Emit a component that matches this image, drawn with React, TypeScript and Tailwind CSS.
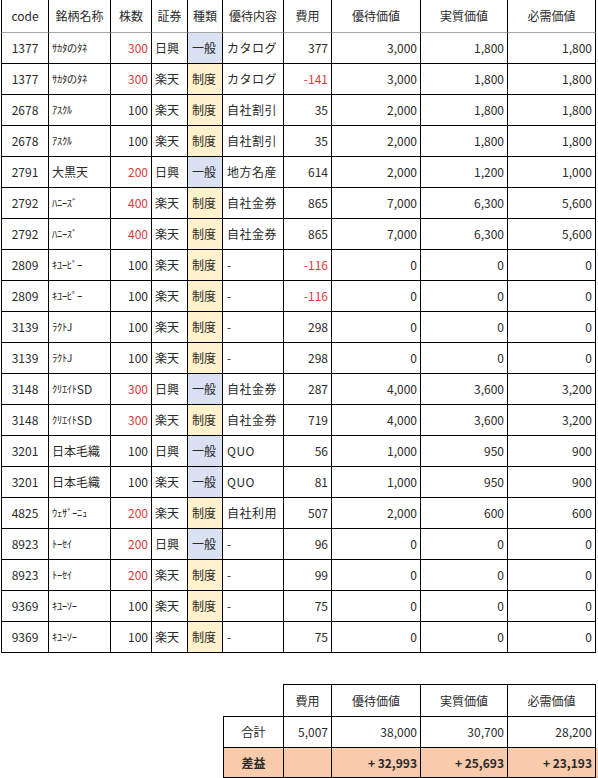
import type { ReactNode } from 'react';

type Kind = '一般' | '制度';

interface Row {
  code: string;
  name: ReactNode;
  shares: number;
  broker: string;
  kind: Kind;
  content: string;
  cost: number;
  yutai: string;
  real: string;
  need: string;
}

// half-width katakana are drawn narrower/smaller in the sheet
const Kana = ({ children }: { children: ReactNode }) => (
  <span className="text-[10.5px] tracking-[-0.3px]">{children}</span>
);

const rows: Row[] = [
  { code: '1377', name: <Kana>ｻｶﾀのﾀﾈ</Kana>, shares: 300, broker: '日興', kind: '一般', content: 'カタログ', cost: 377, yutai: '3,000', real: '1,800', need: '1,800' },
  { code: '1377', name: <Kana>ｻｶﾀのﾀﾈ</Kana>, shares: 300, broker: '楽天', kind: '制度', content: 'カタログ', cost: -141, yutai: '3,000', real: '1,800', need: '1,800' },
  { code: '2678', name: <Kana>ｱｽｸﾙ</Kana>, shares: 100, broker: '楽天', kind: '制度', content: '自社割引', cost: 35, yutai: '2,000', real: '1,800', need: '1,800' },
  { code: '2678', name: <Kana>ｱｽｸﾙ</Kana>, shares: 100, broker: '楽天', kind: '制度', content: '自社割引', cost: 35, yutai: '2,000', real: '1,800', need: '1,800' },
  { code: '2791', name: '大黒天', shares: 200, broker: '日興', kind: '一般', content: '地方名産', cost: 614, yutai: '2,000', real: '1,200', need: '1,000' },
  { code: '2792', name: <Kana>ﾊﾆｰｽﾞ</Kana>, shares: 400, broker: '楽天', kind: '制度', content: '自社金券', cost: 865, yutai: '7,000', real: '6,300', need: '5,600' },
  { code: '2792', name: <Kana>ﾊﾆｰｽﾞ</Kana>, shares: 400, broker: '楽天', kind: '制度', content: '自社金券', cost: 865, yutai: '7,000', real: '6,300', need: '5,600' },
  { code: '2809', name: <Kana>ｷﾕｰﾋﾟｰ</Kana>, shares: 100, broker: '楽天', kind: '制度', content: '-', cost: -116, yutai: '0', real: '0', need: '0' },
  { code: '2809', name: <Kana>ｷﾕｰﾋﾟｰ</Kana>, shares: 100, broker: '楽天', kind: '制度', content: '-', cost: -116, yutai: '0', real: '0', need: '0' },
  { code: '3139', name: <Kana>ﾗｸﾄJ</Kana>, shares: 100, broker: '楽天', kind: '制度', content: '-', cost: 298, yutai: '0', real: '0', need: '0' },
  { code: '3139', name: <Kana>ﾗｸﾄJ</Kana>, shares: 100, broker: '楽天', kind: '制度', content: '-', cost: 298, yutai: '0', real: '0', need: '0' },
  { code: '3148', name: <><Kana>ｸﾘｴｲﾄ</Kana>SD</>, shares: 300, broker: '日興', kind: '一般', content: '自社金券', cost: 287, yutai: '4,000', real: '3,600', need: '3,200' },
  { code: '3148', name: <><Kana>ｸﾘｴｲﾄ</Kana>SD</>, shares: 300, broker: '楽天', kind: '制度', content: '自社金券', cost: 719, yutai: '4,000', real: '3,600', need: '3,200' },
  { code: '3201', name: '日本毛織', shares: 100, broker: '日興', kind: '一般', content: 'QUO', cost: 56, yutai: '1,000', real: '950', need: '900' },
  { code: '3201', name: '日本毛織', shares: 100, broker: '楽天', kind: '一般', content: 'QUO', cost: 81, yutai: '1,000', real: '950', need: '900' },
  { code: '4825', name: <Kana>ｳｪｻﾞｰﾆｭ</Kana>, shares: 200, broker: '楽天', kind: '制度', content: '自社利用', cost: 507, yutai: '2,000', real: '600', need: '600' },
  { code: '8923', name: <Kana>ﾄｰｾｲ</Kana>, shares: 200, broker: '日興', kind: '一般', content: '-', cost: 96, yutai: '0', real: '0', need: '0' },
  { code: '8923', name: <Kana>ﾄｰｾｲ</Kana>, shares: 200, broker: '楽天', kind: '制度', content: '-', cost: 99, yutai: '0', real: '0', need: '0' },
  { code: '9369', name: <Kana>ｷﾕｰｿｰ</Kana>, shares: 100, broker: '楽天', kind: '制度', content: '-', cost: 75, yutai: '0', real: '0', need: '0' },
  { code: '9369', name: <Kana>ｷﾕｰｿｰ</Kana>, shares: 100, broker: '楽天', kind: '制度', content: '-', cost: 75, yutai: '0', real: '0', need: '0' },
];

const headers = ['code', '銘柄名称', '株数', '証券', '種類', '優待内容', '費用', '優待価値', '実質価値', '必需価値'];

const gridCols = 'grid grid-cols-[48px_62px_41px_36px_35px_61px_48px_89px_87px_88px]';
const sumCols = 'grid grid-cols-[61px_48px_89px_87px_88px]';

const cell = 'flex items-center border-r border-b border-black px-[3px] whitespace-nowrap overflow-hidden';

export default function App() {
  return (
    <div
      className="w-[598px] h-[778px] bg-white text-[12px] text-[#2a2a2a] overflow-hidden"
      style={{ fontFamily: '"Noto Sans CJK JP", "Noto Sans", sans-serif' }}
    >
      {/* Main sheet */}
      <div className="pl-px">
        <div className={`${gridCols} h-[33px]`}>
          {headers.map((h, i) => (
            <div
              key={h}
              className={`flex items-center justify-center border-r border-black border-b border-b-[#a6a6a6] ${i === 0 ? 'border-l' : ''}`}
            >
              {h}
            </div>
          ))}
        </div>

        {rows.map((r, i) => (
          <div key={i} className={`${gridCols} h-[31px]`}>
            <div className={`${cell} border-l justify-center`}>{r.code}</div>
            <div className={cell}>{r.name}</div>
            <div className={`${cell} justify-end ${r.shares > 100 ? 'text-[#e0393b]' : ''}`}>{r.shares}</div>
            <div className={cell}>{r.broker}</div>
            <div className={`${cell} pl-[4px] ${r.kind === '一般' ? 'bg-[#d9e1f2]' : 'bg-[#fff2cc]'}`}>{r.kind}</div>
            <div className={`${cell} pl-[4px] tracking-[0.5px]`}>{r.content}</div>
            <div className={`${cell} justify-end ${r.cost < 0 ? 'text-[#e0393b]' : ''}`}>{r.cost}</div>
            <div className={`${cell} justify-end`}>{r.yutai}</div>
            <div className={`${cell} justify-end`}>{r.real}</div>
            <div className={`${cell} justify-end`}>{r.need}</div>
          </div>
        ))}
      </div>

      {/* Totals */}
      <div className="mt-[31px] ml-[223px]">
        <div className={`${sumCols} h-[33px]`}>
          <div className="border-r border-b border-black" />
          {['費用', '優待価値', '実質価値', '必需価値'].map((h) => (
            <div key={h} className="flex items-center justify-center border-t border-r border-b border-black">
              {h}
            </div>
          ))}
        </div>
        <div className={`${sumCols} h-[31px]`}>
          <div className={`${cell} border-l justify-center`}>合計</div>
          <div className={`${cell} justify-end`}>5,007</div>
          <div className={`${cell} justify-end`}>38,000</div>
          <div className={`${cell} justify-end`}>30,700</div>
          <div className={`${cell} justify-end`}>28,200</div>
        </div>
        <div className={`${sumCols} h-[30px] bg-[#f8cbad] font-bold`}>
          <div className={`${cell} border-l justify-center`}>差益</div>
          <div className={cell} />
          <div className={`${cell} justify-end`}>+ 32,993</div>
          <div className={`${cell} justify-end`}>+ 25,693</div>
          <div className={`${cell} justify-end`}>+ 23,193</div>
        </div>
      </div>
    </div>
  );
}
